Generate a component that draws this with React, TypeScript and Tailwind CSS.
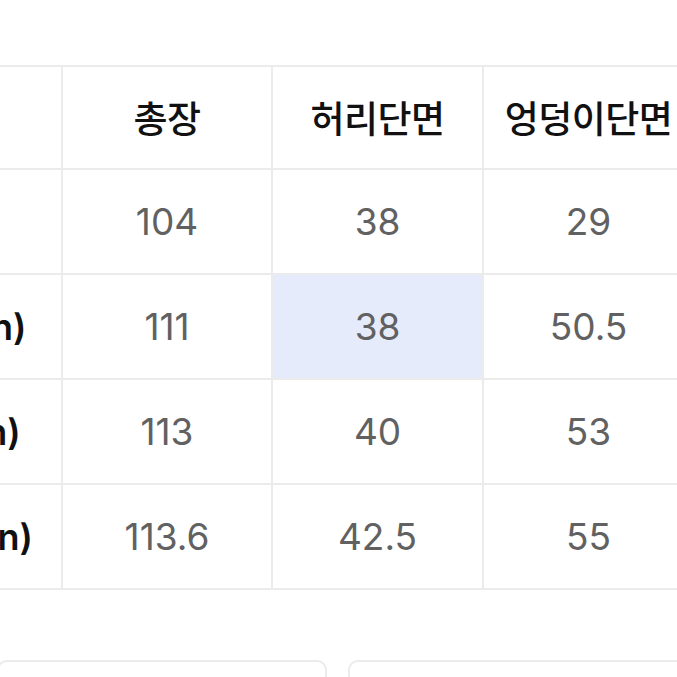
import React from 'react';

const headers = ['', '총장', '허리단면', '엉덩이단면'];

const rows = [
  { label: 'S', values: ['104', '38', '29'] },
  { label: 'M(28in)', values: ['111', '38', '50.5'] },
  { label: 'L(30in)', values: ['113', '40', '53'] },
  { label: 'XL(32in)', values: ['113.6', '42.5', '55'] },
];

const App: React.FC = () => {
  return (
    <div
      className="w-[677px] h-[677px] overflow-hidden bg-white pt-[65px]"
      style={{ fontFamily: 'Inter, "Noto Sans CJK KR", sans-serif' }}
    >
      <div className="ml-[-147px] w-max grid grid-cols-[206px_208px_209px_209px] grid-rows-[101px_103px_103px_103px_103px] gap-[2px] p-[2px] bg-[#ebebeb]">
        {headers.map((h, i) => (
          <div
            key={i}
            className="bg-white flex items-center justify-center text-[37px] font-medium text-[#111] tracking-[-0.5px]"
            style={{ fontFamily: '"Noto Sans CJK KR", sans-serif' }}
          >
            {h}
          </div>
        ))}
        {rows.map((row, r) => (
          <React.Fragment key={r}>
            <div className="bg-white flex items-center justify-center text-[36px] font-semibold text-[#111]">
              {row.label}
            </div>
            {row.values.map((v, c) => (
              <div
                key={c}
                className={
                  'flex items-center justify-center text-[37px] text-[#616161] ' +
                  (r === 1 && c === 1 ? 'bg-[#e6ebfc]' : 'bg-white')
                }
              >
                {v}
              </div>
            ))}
          </React.Fragment>
        ))}
      </div>

      <div className="mt-[70px] ml-[-3px] flex gap-[21px]">
        <div className="w-[330px] h-[60px] shrink-0 rounded-[10px] border-2 border-[#ebebeb]" />
        <div className="w-[340px] h-[60px] shrink-0 rounded-[10px] border-2 border-[#ebebeb]" />
      </div>
    </div>
  );
};

export default App;
